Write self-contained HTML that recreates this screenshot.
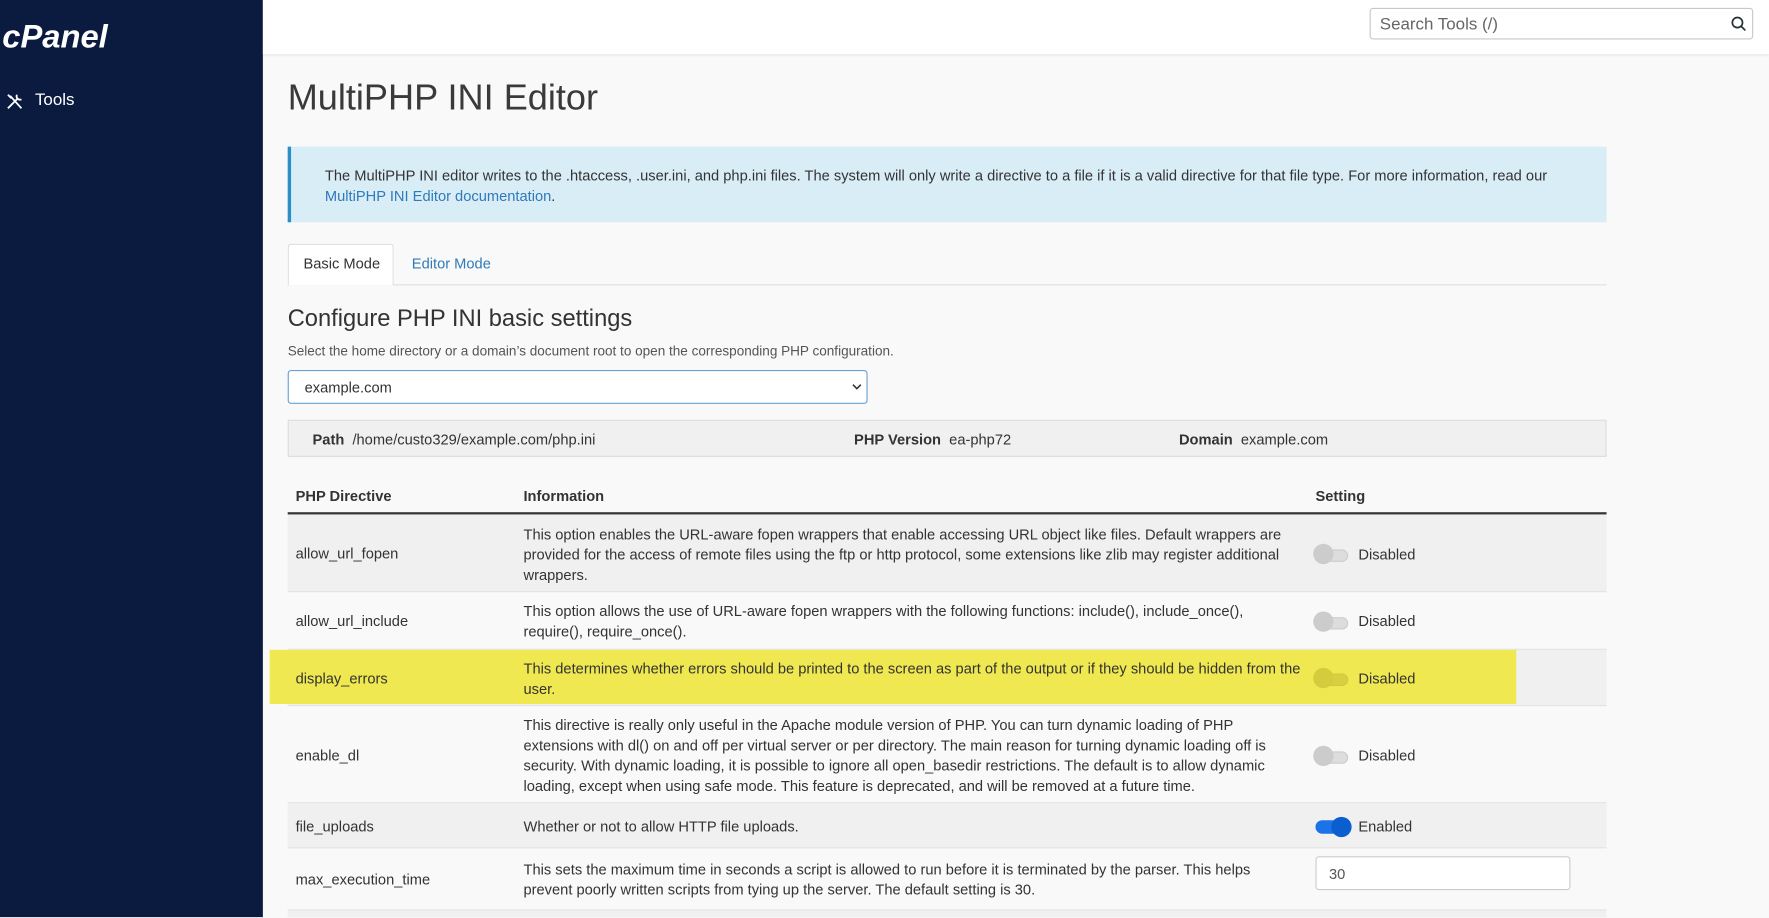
<!DOCTYPE html>
<html><head><meta charset="utf-8"><style>
*{box-sizing:border-box;margin:0;padding:0}
html,body{width:1769px;height:918px;overflow:hidden;background:#f9f9f9}
#w{position:absolute;left:0;top:0;width:1568px;height:813px;overflow:hidden;transform:scale(1.1282);transform-origin:0 0;font-family:"Liberation Sans",sans-serif;color:#333;background:#f9f9f9}
.a{position:absolute}
#side{left:0;top:0;width:233px;height:813px;background:#0b1b3f}
#hdr{left:233px;top:0;width:1335px;height:48px;background:#fff;box-shadow:0 1px 2px rgba(0,0,0,.08)}
.t13{font-size:13px;line-height:18px}
.tg{position:absolute;width:32px;height:14px}
.tg .tr{position:absolute;left:6px;top:2px;width:25px;height:11px;border-radius:6px;background:#ddd;border:1px solid #ccc}
.tg .kn{position:absolute;left:0;top:-3px;width:18px;height:18px;border-radius:50%;background:#ccc}
.row{position:absolute;left:255px;width:1169px;border-bottom:1px solid #e2e2e2}
</style></head><body><div id="w">
<div id="side" class="a">
 <div class="a" style="left:2px;top:17px;color:#fff;font-size:29px;font-weight:bold;font-style:italic;letter-spacing:0px">cPanel</div>
 <svg class="a" style="left:5px;top:82px" width="16" height="16" viewBox="0 0 16 16" fill="none" stroke="#fff" stroke-width="1.6"><path d="M2 14L11 5M10 2a3 3 0 004 4M2 2l3 3M4 3l10 11"/></svg>
 <div class="a" style="left:31px;top:80px;color:#fff;font-size:15px">Tools</div>
</div>
<div id="hdr" class="a">
 <div class="a" style="left:981px;top:7px;width:340px;height:28px;border:1px solid #c8c8c8;border-radius:3px;background:#fff">
  <div class="a" style="left:8px;top:5px;font-size:15px;color:#666">Search Tools (/)</div>
  <svg class="a" style="left:319px;top:6px" width="14" height="14" viewBox="0 0 14 14" fill="none" stroke="#233" stroke-width="1.5"><circle cx="6" cy="6" r="4.5"/><path d="M9.5 9.5L13 13"/></svg>
 </div>
</div>
<div class="a" style="left:255px;top:68px;font-size:32px;font-weight:300;color:#3a3a3a">MultiPHP INI Editor</div>
<div class="a" style="left:255px;top:130px;width:1169px;height:67px;background:#d9edf7;border-left:3px solid #2a8fc7"></div>
<div class="a t13" style="left:288px;top:147px;width:1120px;color:#333">The MultiPHP INI editor writes to the .htaccess, .user.ini, and php.ini files. The system will only write a directive to a file if it is a valid directive for that file type. For more information, read our <span style="color:#2f7ab8">MultiPHP INI Editor documentation</span>.</div>
<div class="a" style="left:255px;top:252px;width:1169px;height:1px;background:#ddd"></div>
<div class="a" style="left:255px;top:216px;width:94px;height:37px;background:#fff;border:1px solid #ddd;border-bottom:none;border-radius:3px 3px 0 0"></div>
<div class="a t13" style="left:269px;top:225px">Basic Mode</div>
<div class="a t13" style="left:365px;top:225px;color:#2f7ab8">Editor Mode</div>
<div class="a" style="left:255px;top:271px;font-size:21px;color:#333">Configure PHP INI basic settings</div>
<div class="a" style="left:255px;top:304px;font-size:12px;color:#555">Select the home directory or a domain’s document root to open the corresponding PHP configuration.</div>
<div class="a" style="left:255px;top:328px;width:514px;height:30px;background:#fff;border:1px solid #6b9fd4;border-radius:3px"></div>
<div class="a t13" style="left:270px;top:335px">example.com</div>
<svg class="a" style="left:755px;top:339px" width="9" height="8" viewBox="0 0 9 8" fill="none" stroke="#333" stroke-width="1.4"><path d="M1 2l3.5 3.5L8 2"/></svg>
<div class="a" style="left:255px;top:372px;width:1169px;height:33px;background:#f0f0f0;border:1px solid #ddd"></div>
<div class="a t13" style="left:277px;top:381px"><b>Path</b>&nbsp;&nbsp;/home/custo329/example.com/php.ini</div>
<div class="a t13" style="left:757px;top:381px"><b>PHP Version</b>&nbsp;&nbsp;ea-php72</div>
<div class="a t13" style="left:1045px;top:381px"><b>Domain</b>&nbsp;&nbsp;example.com</div>
<div class="a t13" style="left:262px;top:431px;font-weight:bold">PHP Directive</div>
<div class="a t13" style="left:464px;top:431px;font-weight:bold">Information</div>
<div class="a t13" style="left:1166px;top:431px;font-weight:bold">Setting</div>
<div class="a" style="left:255px;top:454px;width:1169px;height:2px;background:#333"></div>

<div class="row" style="top:456px;height:69px;background:#f0f0f0"></div>
<div class="row" style="top:525px;height:51px;background:#f9f9f9"></div>
<div class="row" style="top:576px;height:50px;background:#f0f0f0"></div>
<div class="a" style="left:239px;top:576px;width:1105px;height:48px;background:#f0e850"></div>
<div class="row" style="top:626px;height:86px;background:#f9f9f9"></div>
<div class="row" style="top:712px;height:40px;background:#f0f0f0"></div>
<div class="row" style="top:752px;height:55px;background:#f9f9f9"></div>
<div class="row" style="top:807px;height:10px;background:#f0f0f0;border:none"></div>

<div class="a t13" style="left:262px;top:482px">allow_url_fopen</div>
<div class="a t13" style="left:464px;top:465px;width:690px">This option enables the URL-aware fopen wrappers that enable accessing URL object like files. Default wrappers are provided for the access of remote files using the ftp or http protocol, some extensions like zlib may register additional wrappers.</div>
<div class="tg" style="left:1164px;top:485px"><div class="tr"></div><div class="kn"></div></div>
<div class="a t13" style="left:1204px;top:483px">Disabled</div>

<div class="a t13" style="left:262px;top:542px">allow_url_include</div>
<div class="a t13" style="left:464px;top:533px;width:690px">This option allows the use of URL-aware fopen wrappers with the following functions: include(), include_once(), require(), require_once().</div>
<div class="tg" style="left:1164px;top:545px"><div class="tr"></div><div class="kn"></div></div>
<div class="a t13" style="left:1204px;top:542px">Disabled</div>

<div class="a t13" style="left:262px;top:593px">display_errors</div>
<div class="a t13" style="left:464px;top:584px;width:690px">This determines whether errors should be printed to the screen as part of the output or if they should be hidden from the user.</div>
<div class="tg" style="left:1164px;top:595px"><div class="tr" style="background:#d8d040;border-color:#d0c840"></div><div class="kn" style="background:#d4cc3c"></div></div>
<div class="a t13" style="left:1204px;top:593px">Disabled</div>

<div class="a t13" style="left:262px;top:661px">enable_dl</div>
<div class="a t13" style="left:464px;top:634px;width:690px">This directive is really only useful in the Apache module version of PHP. You can turn dynamic loading of PHP extensions with dl() on and off per virtual server or per directory. The main reason for turning dynamic loading off is security. With dynamic loading, it is possible to ignore all open_basedir restrictions. The default is to allow dynamic loading, except when using safe mode. This feature is deprecated, and will be removed at a future time.</div>
<div class="tg" style="left:1164px;top:664px"><div class="tr"></div><div class="kn"></div></div>
<div class="a t13" style="left:1204px;top:661px">Disabled</div>

<div class="a t13" style="left:262px;top:724px">file_uploads</div>
<div class="a t13" style="left:464px;top:724px">Whether or not to allow HTTP file uploads.</div>
<div class="a" style="left:1166px;top:727px;width:32px;height:12px;border-radius:6px;background:#1a73e8"></div>
<div class="a" style="left:1180px;top:724px;width:18px;height:18px;border-radius:50%;background:#0a5ed0"></div>
<div class="a t13" style="left:1204px;top:724px">Enabled</div>

<div class="a t13" style="left:262px;top:771px">max_execution_time</div>
<div class="a t13" style="left:464px;top:762px;width:690px">This sets the maximum time in seconds a script is allowed to run before it is terminated by the parser. This helps prevent poorly written scripts from tying up the server. The default setting is 30.</div>
<div class="a" style="left:1166px;top:759px;width:226px;height:30px;background:#fff;border:1px solid #ccc;border-radius:3px"></div>
<div class="a t13" style="left:1178px;top:766px;color:#555">30</div>
</div></body></html>
